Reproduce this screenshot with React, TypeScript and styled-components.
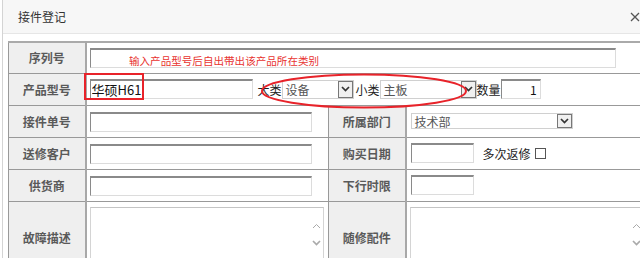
import React from 'react'
import styled, { createGlobalStyle } from 'styled-components'

const GlobalStyle = createGlobalStyle`
  html, body {
    margin: 0;
    padding: 0;
    overflow: hidden;
    background: #fff;
  }
  body {
    font-family: "Noto Sans CJK SC", "Microsoft YaHei", sans-serif;
  }
`

const Dialog = styled.div`
  width: 637px;
  height: 258px;
  margin-left: 2px;
  border-left: 1px solid #d4d4d4;
  overflow: hidden;
  background: #fff;
`

const TitleBar = styled.div`
  height: 34px;
  box-sizing: border-box;
  background: #f7f7f7;
  border-bottom: 1px solid #e6e6e6;
  display: flex;
  align-items: center;
  justify-content: space-between;
  padding: 0 0 0 15px;
  font-size: 12px;
  color: #333;
`

const Close = styled.svg`
  width: 10px;
  height: 10px;
`

const Body = styled.div`
  padding: 7px 0 0 5px;
`

const Table = styled.table`
  width: 660px;
  table-layout: fixed;
  border-collapse: collapse;
  border-top: 2px solid #aaa;
`

const Row = styled.tr<{ $h: number }>`
  height: ${p => p.$h}px;
`

const Label = styled.th`
  background: #efefef;
  color: #5a5a5a;
  font-size: 12px;
  font-weight: bold;
  text-align: center;
  border: 1px solid #999;
  border-right-width: 2px;
  border-right-color: #a8a8a8;
  padding: 0;
`

const Cell = styled.td`
  border: 1px solid #999;
  padding: 0 0 0 3px;
  vertical-align: middle;
`

const TopCell = styled(Cell)`
  vertical-align: top;
  padding-top: 5px;
`

const Line = styled.div`
  position: relative;
  display: flex;
  align-items: center;
  font-size: 12px;
  color: #222;
`

const Field = styled.input<{ $w: number; $size?: number; $right?: boolean }>`
  box-sizing: border-box;
  width: ${p => p.$w}px;
  height: 20px;
  margin: 0;
  padding: 0 3px 0 1px;
  border: 1px solid;
  border-color: #8a8a8a #dcdcdc #dcdcdc #8a8a8a;
  border-top-width: 2px;
  font-family: inherit;
  font-size: ${p => p.$size ?? 12}px;
  color: #111;
  text-align: ${p => (p.$right ? 'right' : 'left')};
  background: #fff;
  outline: none;
`

const Hint = styled.span`
  position: absolute;
  left: 39px;
  top: 4px;
  font-size: 12px;
  color: #e8332f;
  white-space: nowrap;
  transform: scale(0.88);
  transform-origin: left center;
  pointer-events: none;
`

const Caption = styled.span<{ $ml?: number }>`
  margin-left: ${p => p.$ml ?? 0}px;
  font-size: 12px;
  color: #222;
  white-space: nowrap;
`

const Select = styled.div<{ $w: number; $h?: number; $ml?: number }>`
  box-sizing: border-box;
  width: ${p => p.$w}px;
  height: ${p => p.$h ?? 19}px;
  margin-left: ${p => p.$ml ?? 0}px;
  display: flex;
  align-items: stretch;
  border: 1px solid #d0d0d0;
  background: #fff;
`

const SelectText = styled.span`
  flex: 1;
  padding-left: 3px;
  font-size: 12px;
  color: #555;
  display: flex;
  align-items: center;
`

const Arrow = styled.span`
  width: 15px;
  box-sizing: border-box;
  border: 1px solid #777;
  background: #f0f0f0;
  display: flex;
  align-items: center;
  justify-content: center;
`

const RedBox = styled.div`
  position: absolute;
  left: -6px;
  top: -6px;
  width: 60px;
  height: 27px;
  box-sizing: border-box;
  border: 2px solid #e8232a;
  pointer-events: none;
`

const Ellipse = styled.svg`
  position: absolute;
  left: 167px;
  top: -7px;
  pointer-events: none;
`

const Check = styled.span`
  width: 9px;
  height: 9px;
  margin-left: 4px;
  border: 1px solid #555;
  background: #fff;
`

const TextBox = styled.div`
  box-sizing: border-box;
  width: 234px;
  height: 62px;
  border: 1px solid #d4d4d4;
  border-top-color: #c4c4c4;
  display: flex;
  justify-content: flex-end;
`

const ScrollBar = styled.div`
  width: 12px;
  display: flex;
  flex-direction: column;
  align-items: center;
  gap: 11px;
  padding-top: 15px;
`

const Chevron = ({ up, color = '#333' }: { up?: boolean; color?: string }) => (
  <svg width="9" height="6" viewBox="0 0 9 6">
    <polyline
      points={up ? '1,5 4.5,1.5 8,5' : '1,1 4.5,4.5 8,1'}
      fill="none"
      stroke={color}
      strokeWidth={up ? 1 : 1.7}
    />
  </svg>
)

const Dropdown = ({ text, w, h, ml }: { text: string; w: number; h?: number; ml?: number }) => (
  <Select $w={w} $h={h} $ml={ml}>
    <SelectText>{text}</SelectText>
    <Arrow>
      <Chevron />
    </Arrow>
  </Select>
)

const Memo = () => (
  <TextBox>
    <ScrollBar>
      <Chevron up color="#aaa" />
      <Chevron color="#aaa" />
    </ScrollBar>
  </TextBox>
)

export default function App() {
  return (
    <>
      <GlobalStyle />
      <Dialog>
        <TitleBar>
          接件登记
          <Close viewBox="0 0 10 10">
            <path d="M1 1 L9 9 M9 1 L1 9" stroke="#555" strokeWidth="1.3" />
          </Close>
        </TitleBar>
        <Body>
          <Table>
            <colgroup>
              <col style={{ width: 77 }} />
              <col style={{ width: 243 }} />
              <col style={{ width: 77 }} />
              <col />
            </colgroup>
            <tbody>
              <Row $h={31}>
                <Label>序列号</Label>
                <Cell colSpan={3}>
                  <Line>
                    <Field $w={526} readOnly defaultValue="" />
                    <Hint>输入产品型号后自出带出该产品所在类别</Hint>
                  </Line>
                </Cell>
              </Row>
              <Row $h={32}>
                <Label>产品型号</Label>
                <Cell colSpan={3}>
                  <Line>
                    <Field $w={163} $size={13} readOnly defaultValue="华硕H61" />
                    <Caption $ml={5}>大类</Caption>
                    <Dropdown text="设备" w={72} />
                    <Caption $ml={2}>小类</Caption>
                    <Dropdown text="主板" w={97} />
                    <Caption>数量</Caption>
                    <Field $w={40} $right readOnly defaultValue="1" />
                    <RedBox />
                    <Ellipse width="214" height="38" viewBox="0 0 214 38">
                      <ellipse cx="107" cy="19" rx="102" ry="16.5" fill="none" stroke="#e8232a" strokeWidth="2" />
                    </Ellipse>
                  </Line>
                </Cell>
              </Row>
              <Row $h={32}>
                <Label>接件单号</Label>
                <Cell>
                  <Field $w={222} readOnly />
                </Cell>
                <Label>所属部门</Label>
                <Cell>
                  <Line>
                    <Dropdown text="技术部" w={162} h={16} ml={1} />
                  </Line>
                </Cell>
              </Row>
              <Row $h={32}>
                <Label>送修客户</Label>
                <Cell>
                  <Field $w={222} readOnly />
                </Cell>
                <Label>购买日期</Label>
                <Cell>
                  <Line>
                    <Field $w={63} readOnly style={{ marginLeft: 1 }} />
                    <Caption $ml={9}>多次返修</Caption>
                    <Check />
                  </Line>
                </Cell>
              </Row>
              <Row $h={32}>
                <Label>供货商</Label>
                <Cell>
                  <Field $w={222} readOnly />
                </Cell>
                <Label>下行时限</Label>
                <Cell>
                  <Line>
                    <Field $w={63} readOnly style={{ marginLeft: 1 }} />
                  </Line>
                </Cell>
              </Row>
              <Row $h={72}>
                <Label>故障描述</Label>
                <TopCell>
                  <Memo />
                </TopCell>
                <Label>随修配件</Label>
                <TopCell>
                  <Memo />
                </TopCell>
              </Row>
            </tbody>
          </Table>
        </Body>
      </Dialog>
    </>
  )
}
